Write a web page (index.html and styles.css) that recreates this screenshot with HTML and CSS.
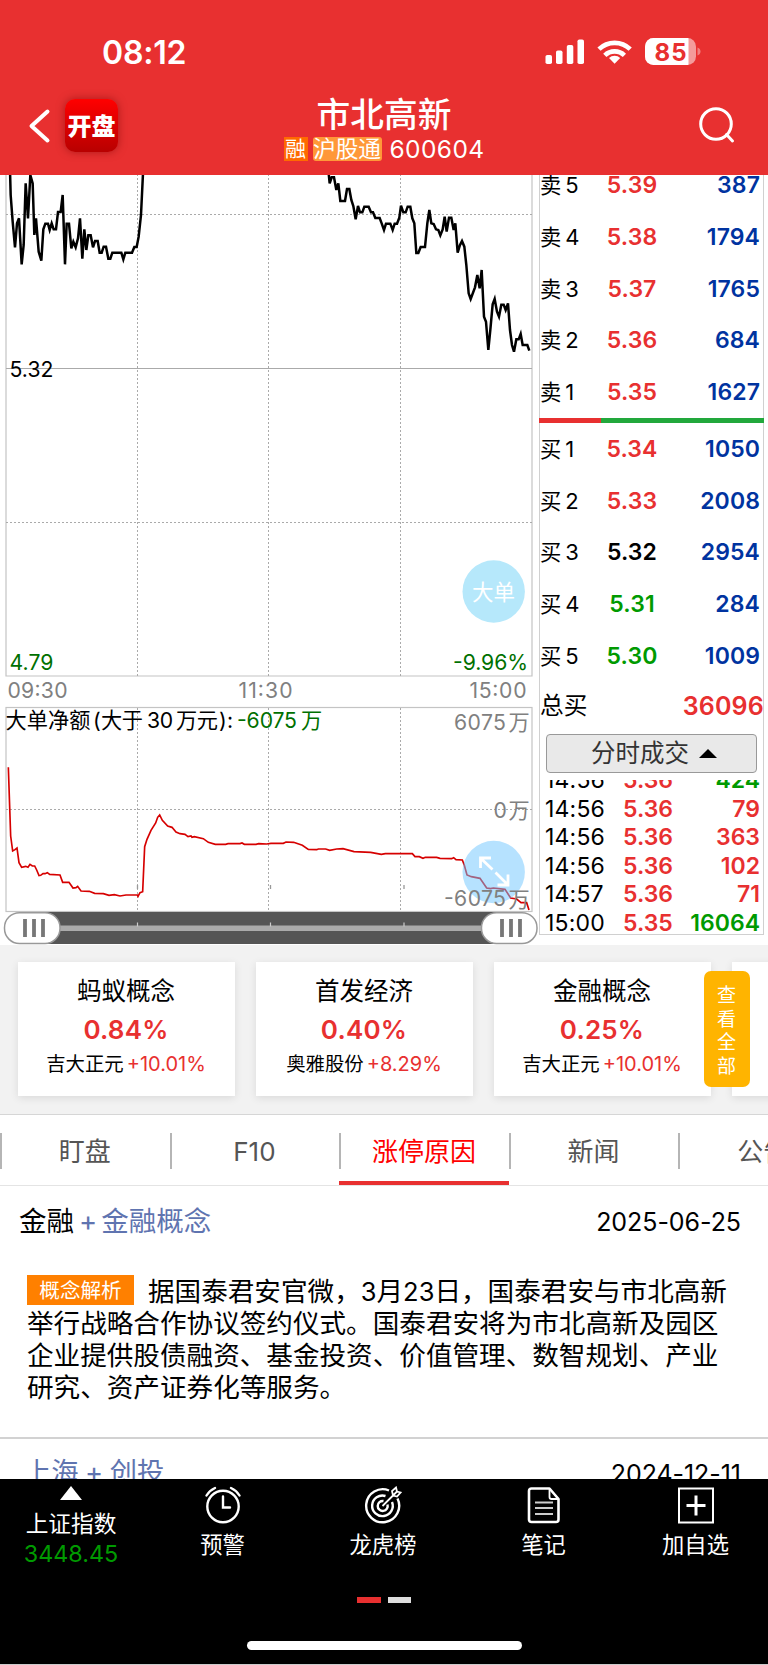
FILE: index.html
```html
<!DOCTYPE html>
<html lang="zh-CN">
<head>
<meta charset="utf-8">
<title>市北高新 600604</title>
<link rel="stylesheet" href="styles.css">
</head>
<body>
<div class="app">
  <header class="header">
    <div class="status">
      <span class="clock">08:12</span>
      <svg class="status-icons" width="156" height="28" viewBox="545 38 156 28">
        <g fill="#fff">
          <rect x="545.5" y="55" width="6.5" height="9" rx="1.8"/>
          <rect x="556" y="50.500" width="6.500" height="13.500" rx="1.800"/>
          <rect x="566.800" y="45" width="6.500" height="19" rx="1.800"/>
          <rect x="577.500" y="39.500" width="6.500" height="24.500" rx="1.800"/>
        </g>
        <g fill="none" stroke="#fff" stroke-width="4.600">
          <path d="M599 49.200a22.300 22.300 0 0 1 31.200 0"/>
          <path d="M604.800 55.400a14 14 0 0 1 19.600 0"/>
        </g>
        <path d="M614.600 63.800l-5.600-5.700a8 8 0 0 1 11.200 0z" fill="#fff"/>
        <clipPath id="cell"><rect x="645" y="38" width="51" height="27" rx="8.500"/></clipPath>
        <g clip-path="url(#cell)"><rect x="645" y="38" width="51" height="27" fill="#f49b9b"/><rect x="645" y="38" width="43.500" height="27" fill="#fff"/></g>
        <path d="M697.500 47.500q3 1.200 3 4t-3 4z" fill="#f08080"/>
        <text x="654.500" y="60.600" class="battery" textLength="32">85</text>
      </svg>
    </div>
    <div class="navbar">
      <div class="nav-left">
        <svg class="back" width="24" height="36" viewBox="0 0 24 36"><path d="M20.500 3.500 4.500 18 20.500 32.500" fill="none" stroke="#fff" stroke-width="4" stroke-linecap="round" stroke-linejoin="round"/></svg>
        <div class="logo">开盘</div>
      </div>
      <div class="titles">
        <h1 class="title">市北高新</h1>
        <div class="subtitle"><span class="tag tag-rong">融</span><span class="tag tag-hgt">沪股通</span><span class="code">600604</span></div>
      </div>
      <svg class="search" width="38" height="38" viewBox="0 0 38 38"><g fill="none" stroke="#fff" stroke-width="3" stroke-linecap="round"><circle cx="18" cy="18" r="15.300"/><path d="M28.500 28.500 34.500 35"/></g></svg>
    </div>
  </header>

  <main class="market">
    <svg class="charts" width="538" height="771" viewBox="0 174 538 771">
      <g fill="none" stroke="#c4c4c4" stroke-width="1.200">
        <path d="M6 170V676H532V170"/>
        <rect x="6" y="707.500" width="526" height="204"/>
      </g>
      <g class="grid">
        <path d="M6 214.500H532M6 522.500H532M6 809.500H532"/>
        <path d="M137.500 174V676M268.500 174V676M400.500 174V676M137.500 708V911M268.500 708V911M400.500 708V911"/>
      </g>
      <path d="M6 368.500H532" stroke="#aaa"/>
      <path d="M137.500 885v4M270.500 885v4M404 885v4" stroke="#999" stroke-width="1.300"/>
      <g transform="translate(0 170) scale(.33333)" fill="none" stroke="#000" stroke-width="7.500">
        <path d="M30 0 32 75 38 155 45 232 51 160 57 145 65 283 71 225 77 40 84 145 91 15 98 40 103 195 108 145 116 245 124 272 130 178 136 161 144 161 149 180 155 160 161 178 168 178 174 126 182 126 188 75 195 283 200 161 207 161 214 235 220 215 227 232 234 205 240 145 247 266 253 178 259 240 265 196 272 196 279 232 285 213 293 213 299 248 305 248 311 230 318 230 325 266 331 266 337 248 364 248 370 268 376 248 396 248 403 231 410 231 416 200 423 135 429 10 430 0"/>
        <path transform="translate(900 0)" d="M85 0 89 40 95 22 102 22 109 60 115 40 121 93 135 93 141 57 148 57 154 90 160 108 167 148 174 108 180 127 187 127 193 110 206 110 213 127 219 127 226 144 239 144 245 160 252 180 258 161 271 161 278 180 284 161 291 161 298 143 303 107 310 127 317 127 323 110 331 110 337 145 343 160 349 249 355 249 362 231 375 231 382 160 388 120 394 160 401 162 408 178 415 180 421 196 428 178 434 140 440 185 447 143 454 143 461 180 466 160 473 248 480 225 486 213 493 230 499 285 506 370 512 387 525 352 532 315 539 355 545 300 552 440 558 455 565 540 571 480 578 403 584 387 591 425 597 440 604 404 611 404 617 420 624 400 630 480 636 525 642 545 649 508 656 508 662 492 668 525 682 525 688 542"/>
      </g>
      <path transform="translate(0 640) scale(.33333)" fill="none" stroke="#d60000" stroke-width="5" d="M25 382 32 588 38 633 45 629 51 624 57 668 65 682 77 679 84 682 90 673 97 678 104 678 110 690 117 707 122 706 129 701 135 701 142 698 149 703 180 705 188 727 207 727 219 744 228 743 233 739 243 753 268 754 284 760 310 761 327 766 343 764 360 768 378 765 412 765 414 769 420 758 428 755 434 620 441 598 453 571 467 549 473 532 479 525 487 541 503 558 516 562 528 576 540 581 555 583 564 590 573 588 576 592 583 590 610 596 625 607 646 613 677 613 684 611 720 611 726 609 733 613 768 613 776 611 800 612 813 610 850 610 858 606 881 607 907 616 925 628 950 629 955 627 977 627 989 631 1010 627 1029 626 1062 635 1112 637 1144 643 1156 641 1237 641 1245 650 1258 650 1269 655 1276 652 1310 652 1320 655 1355 656 1361 653 1368 659 1387 660 1393 676 1401 705 1414 710 1440 715 1460 744 1472 746 1480 744 1515 748 1532 774 1550 777 1563 788 1580 788 1587 810"/>
      <circle cx="493.700" cy="591.500" r="31.200" fill="#b6e8fb"/>
      <text class="bigorder" x="493.500" y="599.500" text-anchor="middle">大单</text>
      <circle cx="493.700" cy="872" r="31.200" fill="#6ec5ff" fill-opacity=".5"/>
      <path d="M492.500 869.500 481 858.500M480.500 868V858H491M495.500 872.500 507.500 884.500M497.500 885H508V874.500" fill="none" stroke="#fff" stroke-width="2.800"/>
      <g class="lbl">
        <text x="9.500" y="376.800" textLength="44">5.32</text>
        <g fill="#007000">
          <text x="9.500" y="670.300" textLength="44">4.79</text>
          <text x="453" y="670.300" textLength="75">-9.96%</text>
          <text x="237" y="727.500" textLength="60">-6075</text><text x="301" y="728">万</text>
        </g>
        <g fill="#808080">
          <text x="7.500" y="698.300" textLength="60">09:30</text>
          <text x="238.500" y="698.300" textLength="54">11:30</text>
          <text x="469.500" y="698.300" textLength="57">15:00</text>
          <text x="454" y="729.500" textLength="52">6075</text><text x="508.500" y="730">万</text>
          <text x="493.500" y="817.500">0</text><text x="508.500" y="818">万</text>
          <text x="444" y="906" textLength="62">-6075</text><text x="508.500" y="906.500">万</text>
        </g>
        <text x="5.500" y="727.500" textLength="85">大单净额</text><text x="93" y="727.500">(</text><text x="101" y="727.500" textLength="42">大于</text><text x="147" y="727.500" textLength="26">30</text><text x="176" y="727.500" textLength="42">万元</text><text x="219" y="727.500" textLength="14">):</text>
      </g>
      <rect x="24" y="912" width="490" height="32" fill="#555"/>
      <rect x="50" y="925.500" width="440" height="5.500" fill="#aaa"/>
      <path d="M137.500 922.500v4M270.500 922.500v4M404 922.500v4" stroke="#ccc" stroke-width="1.200"/>
      <g fill="#fff" stroke="#999" stroke-width="1.500">
        <rect x="4.500" y="912.700" width="55.500" height="30.800" rx="15"/>
        <rect x="481.500" y="912.700" width="55.500" height="30.800" rx="15"/>
      </g>
      <path d="M25 919v18M34 919v18M43 919v18M502 919v18M511 919v18M520 919v18" stroke="#777" stroke-width="3.800"/>
    </svg>

    <section class="book">
      <div class="sells">
        <div class="row"><span class="side">卖<i>5</i></span><b class="up">5.39</b><b class="vol">387</b></div>
        <div class="row"><span class="side">卖<i>4</i></span><b class="up">5.38</b><b class="vol">1794</b></div>
        <div class="row"><span class="side">卖<i>3</i></span><b class="up">5.37</b><b class="vol">1765</b></div>
        <div class="row"><span class="side">卖<i>2</i></span><b class="up">5.36</b><b class="vol">684</b></div>
        <div class="row"><span class="side">卖<i>1</i></span><b class="up">5.35</b><b class="vol">1627</b></div>
      </div>
      <div class="ratio"><span class="ratio-red"></span></div>
      <div class="buys">
        <div class="row"><span class="side">买<i>1</i></span><b class="up">5.34</b><b class="vol">1050</b></div>
        <div class="row"><span class="side">买<i>2</i></span><b class="up">5.33</b><b class="vol">2008</b></div>
        <div class="row"><span class="side">买<i>3</i></span><b>5.32</b><b class="vol">2954</b></div>
        <div class="row"><span class="side">买<i>4</i></span><b class="down">5.31</b><b class="vol">284</b></div>
        <div class="row"><span class="side">买<i>5</i></span><b class="down">5.30</b><b class="vol">1009</b></div>
      </div>
      <div class="total"><span>总买</span><b class="up">36096</b></div>
      <div class="toggle">分时成交<span class="caret"></span></div>
      <div class="trades">
        <div class="trade"><span>14:56</span><b class="up">5.36</b><b class="down">424</b></div>
        <div class="trade"><span>14:56</span><b class="up">5.36</b><b class="up">79</b></div>
        <div class="trade"><span>14:56</span><b class="up">5.36</b><b class="up">363</b></div>
        <div class="trade"><span>14:56</span><b class="up">5.36</b><b class="up">102</b></div>
        <div class="trade"><span>14:57</span><b class="up">5.36</b><b class="up">71</b></div>
        <div class="trade"><span>15:00</span><b class="up">5.35</b><b class="down">16064</b></div>
      </div>
    </section>
  </main>

  <section class="concepts">
    <div class="card"><h2>蚂蚁概念</h2><strong>0.84%</strong><p>吉大正元<em>+10.01%</em></p></div>
    <div class="card"><h2>首发经济</h2><strong>0.40%</strong><p>奥雅股份<em>+8.29%</em></p></div>
    <div class="card"><h2>金融概念</h2><strong>0.25%</strong><p>吉大正元<em>+10.01%</em></p></div>
    <div class="card"></div>
    <div class="view-all">查看全部</div>
  </section>

  <nav class="tabs">
    <div class="tab">盯盘</div>
    <div class="tab">F10</div>
    <div class="tab active">涨停原因</div>
    <div class="tab">新闻</div>
    <div class="tab">公告</div>
  </nav>

  <section class="reasons">
    <div class="reason-head"><div class="topic">金融<span class="plus">+</span><span class="link">金融概念</span></div><time>2025-06-25</time></div>
    <p class="detail"><span class="badge">概念解析</span>据国泰君安官微，<span class="num">3</span>月<span class="num">23</span>日，国泰君安与市北高新<br>举行战略合作协议签约仪式。国泰君安将为市北高新及园区<br>企业提供股债融资、基金投资、价值管理、数智规划、产业<br>研究、资产证券化等服务。</p>
    <div class="reason-next"><div class="link">上海<span class="plus2">+</span>创投</div><time>2024-12-11</time></div>
  </section>

  <footer class="bottom">
    <div class="actions">
      <div class="index"><span class="tri"></span><span class="index-name">上证指数</span><span class="index-value">3448.45</span></div>
      <div class="action">
        <svg width="38" height="38" viewBox="0 0 38 38"><g fill="none" stroke="#fff" stroke-width="2.400" stroke-linecap="round"><circle cx="19" cy="20.500" r="15.700"/><path d="M19 10.500V21.500H26M2.500 9.500Q5.500 4.500 11 2M35.500 9.500Q32.500 4.500 27 2"/></g></svg>预警</div>
      <div class="action">
        <svg width="38" height="38" viewBox="0 0 38 38"><g fill="none" stroke="#fff" stroke-width="2.400"><path d="M25 4.500A16.500 16.500 0 1 0 33.500 12.500"/><path d="M21.500 10A10.300 10.300 0 1 0 28 16"/><path d="M19.500 15A5 5 0 1 0 23.500 18.500"/><path d="M18.500 20 29 9.500M29 9.500 28 5 32 1.500 33 5.500 36.500 6.500 33 10.500ZM29 9.500 33 5.500" stroke-width="1.800"/></g></svg>龙虎榜</div>
      <div class="action">
        <svg width="38" height="38" viewBox="0 0 38 38"><g fill="none" stroke="#fff" stroke-width="2.600" stroke-linejoin="round"><path d="M6.500 2.500H24.500L33.500 13V33.500Q33.500 36 31 36H6.500Q4 36 4 33.500V5Q4 2.500 6.500 2.500Z"/><path d="M24.500 2.500V11Q24.500 13 26.500 13H33.500" stroke-width="1.800"/></g><path d="M10 16.500H28M10 22H28M10 28H28" stroke="#ccc" stroke-width="1.800"/></svg>笔记</div>
      <div class="action">
        <svg width="38" height="38" viewBox="0 0 38 38"><rect x="2" y="2.500" width="34" height="34" fill="none" stroke="#fff" stroke-width="2"/><path d="M19 9.500V29.500M9.500 19.500H28.500" stroke="#fff" stroke-width="3"/></svg>加自选</div>
    </div>
    <div class="pager"><span class="on"></span><span></span></div>
    <div class="home"></div>
  </footer>
</div>
</body>
</html>
```
FILE: styles.css
```css
* { box-sizing: border-box; }
body { margin: 0; background: #fff; }
.app {
  width: 768px;
  height: 1665px;
  overflow: hidden;
  display: flex;
  flex-direction: column;
  font-family: Inter, "Noto Sans CJK SC", sans-serif;
  color: #000;
}
h1, h2, p { margin: 0; font-weight: 400; }
i, em { font-style: normal; }
b { font-weight: 600; }
.up { color: #e83030; }
.down { color: #009a00; }

/* header */
.header { height: 174.500px; flex: none; background: #e83030; color: #fff; }
.status { height: 92px; padding: 38px 67px 0 102px; display: flex; justify-content: space-between; }
.clock { font-size: 32px; line-height: 30px; font-weight: 600; letter-spacing: -.2px; }
.battery { font-size: 24px; font-weight: 700; fill: #e83030; }
.navbar { height: 82px; display: grid; grid-template-columns: 1fr auto 1fr; }
.nav-left { display: flex; padding: 7px 0 0 27px; gap: 14px; }
.back { margin-top: 9px; }
.logo {
  width: 53px; height: 53px; border-radius: 10px;
  background: linear-gradient(#ff0000, #b80000);
  box-shadow: 0 0 8px rgba(110, 0, 0, .5);
  font-size: 24px; font-weight: 900; line-height: 55px; text-align: center;
}
.titles { text-align: center; padding-top: 1px; }
.title { font-size: 33.700px; line-height: 44px; font-weight: 500; }
.subtitle { display: flex; height: 24px; align-items: center; justify-content: center; }
.tag { height: 24px; line-height: 23px; font-size: 22.700px; }
.tag-rong { width: 24px; background: #ff6a00; font-size: 21px; }
.tag-hgt { width: 69px; margin-left: 5px; background: #ff9838; border-radius: 3px; }
.code { margin-left: 8px; font-size: 24.500px; line-height: 24px; letter-spacing: .4px; }
.search { margin: 14px 32px 0 0; justify-self: end; }

/* market */
.market { height: 770.500px; flex: none; display: flex; overflow: hidden; align-items: flex-end; }
.charts { flex: none; display: block; }
.grid { fill: none; stroke: #aaa; stroke-dasharray: 2 2; }
.lbl { font-size: 21.200px; }
.bigorder { font-size: 21.500px; fill: #fff; }
.book {
  width: 225px; height: 771px; margin-left: 1px; padding-bottom: 10px;
  display: flex; flex-direction: column; overflow: hidden;
  background:
    linear-gradient(#d0d0d0, #d0d0d0) 0 0 / 1px 761px no-repeat,
    linear-gradient(#d0d0d0, #d0d0d0) 224px 0 / 1px 761px no-repeat,
    linear-gradient(#d0d0d0, #d0d0d0) 0 760px / 225px 1px no-repeat;
}
.sells { margin-top: -14.900px; height: 258.400px; flex: none; }
.row { height: 51.800px; display: grid; grid-template-columns: 62px 60px 1fr; align-items: center; padding: 0 4px 0 1px; font-size: 23px; line-height: 30px; }
.row b { letter-spacing: .1px; }
.row b:nth-child(2) { text-align: center; }
.side { font-size: 21.300px; }
.side i { font-size: 22px; margin-left: 4px; }
.row .vol { color: #0033a0; text-align: right; }
.ratio { height: 5.500px; flex: none; background: #22a83c; }
.ratio-red { display: block; width: 62px; height: 100%; background: #e83030; }
.buys { flex: none; height: 259px; }
.total { flex: none; height: 47px; display: flex; justify-content: space-between; align-items: center; font-size: 23.700px; padding-left: 1px; line-height: 30px; }
.total b { font-size: 25px; letter-spacing: .2px; }
.toggle {
  flex: none; width: 211px; height: 39px; margin: 4.500px 0 0 7px;
  border: 1px solid #999; border-radius: 4px; background: #e9e9e9;
  display: flex; justify-content: center; align-items: center; gap: 10px;
  font-size: 24.500px; line-height: 32px; color: #333; padding-left: 5px;
}
.caret { border: solid transparent; border-width: 0 9px 9px; border-bottom-color: #000; }
.trades { flex: 1; margin-top: 7px; overflow: hidden; display: flex; flex-direction: column; justify-content: flex-end; }
.trade { flex: none; height: 28.500px; display: grid; grid-template-columns: 78px 52px 1fr; align-items: center; padding: 2px 4px 0 6px; font-size: 23px; line-height: 28px; }
.trade span { letter-spacing: .2px; }
.trade b:last-child { text-align: right; }

/* concept cards */
.concepts { position: relative; height: 169px; flex: none; background: #f2f2f2; padding: 17px 0 0 18px; display: flex; gap: 21px; overflow: hidden; }
.card { flex: none; width: 217px; height: 134px; background: #fff; box-shadow: 0 2px 8px rgba(0, 0, 0, .1); text-align: center; padding: 10px 1px 0 0; }
.card h2 { font-size: 24.500px; line-height: 39px; }
.card strong { display: block; font-size: 26px; line-height: 38px; font-weight: 600; color: #e83030; letter-spacing: .2px; }
.card p { font-size: 19.400px; line-height: 30px; }
.card em { color: #e83030; margin-left: 3px; font-size: 20px; }
.view-all {
  position: absolute; left: 703.500px; top: 26px; width: 46px; height: 116px; border-radius: 7px;
  background: #ffb400; color: #fff; font-size: 19px; line-height: 23.600px; padding: 13px 13.500px 0; word-break: break-all;
}

/* tabs */
.tabs { height: 72px; flex: none; border-top: 1.500px solid #d6d6d6; border-bottom: 1.500px solid #e4e4e4; display: flex; background: #fff; }
.tab { position: relative; flex: none; width: 169.600px; height: 70px; line-height: 73px; text-align: center; font-size: 26px; color: #555; }
.tab::before { content: ""; position: absolute; left: 0; top: 18px; width: 2px; height: 36px; background: #b5b5b5; }
.tab.active { color: #f00; }
.tab.active::after { content: ""; position: absolute; left: 0; bottom: 0; width: 100%; height: 4px; background: #e83030; }

/* reasons */
.reasons { height: 292.500px; flex: none; overflow: hidden; }
.reason-head { height: 71px; display: flex; justify-content: space-between; align-items: center; padding: 0 27px 0 19px; font-size: 27.500px; line-height: 40px; }
.topic { margin-top: -2px; }
time { font-size: 25px; letter-spacing: -.05px; line-height: 40px; }
.link, .plus { color: #5f74b0; }
.plus { margin: 0 4px 0 5px; }
.detail { margin: 0; height: 181.500px; padding: 17px 0 0 27px; font-size: 26.600px; line-height: 32px; white-space: nowrap; font-family: "Noto Sans CJK SC", sans-serif; border-bottom: 2px solid #d2d2d2; }
.num { font-family: Inter, sans-serif; font-size: 25.500px; line-height: 20px; }
.badge { display: inline-block; vertical-align: top; width: 107px; height: 30px; margin: 1px 14px 0 0; background: #ff8000; color: #fff; font-size: 20.600px; line-height: 29px; text-align: center; }
.reason-next { display: flex; justify-content: space-between; align-items: center; height: 69px; padding: 0 27px 0 24px; font-size: 27.300px; line-height: 40px; }
.reason-next time { margin-top: 2px; }
.plus2 { margin: 0 6.500px; }

/* bottom bar */
.bottom { height: 186px; flex: none; background: #000; color: #fff; border-bottom: 1px solid #ccc; }
.actions { height: 118.500px; display: grid; grid-template-columns: 142px 161px 160px 161px 143px; }
.index { display: flex; flex-direction: column; align-items: center; padding-top: 7.500px; }
.tri { border: solid transparent; border-width: 0 11px 14px; border-bottom-color: #fff; }
.index-name { font-size: 22.700px; line-height: 30px; margin-top: 9px; }
.index-value { font-size: 23.300px; line-height: 30px; color: #009a00; }
.action { display: flex; flex-direction: column; align-items: center; padding-top: 7.500px; font-size: 22.300px; line-height: 30px; gap: 6px; }
.pager { display: flex; justify-content: center; gap: 7px; height: 44px; }
.pager span { width: 23.500px; height: 6px; background: #ddd; }
.pager .on { background: #e83030; }
.home { width: 275px; height: 9px; border-radius: 5px; background: #fff; margin: 0 auto; }
```
